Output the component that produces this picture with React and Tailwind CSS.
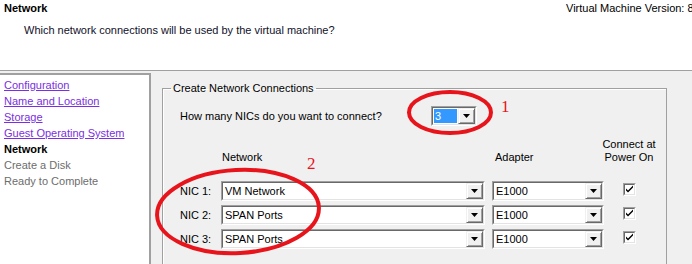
import React from 'react';

const navItems = [
  { label: 'Configuration', state: 'link' },
  { label: 'Name and Location', state: 'link' },
  { label: 'Storage', state: 'link' },
  { label: 'Guest Operating System', state: 'link' },
  { label: 'Network', state: 'current' },
  { label: 'Create a Disk', state: 'todo' },
  { label: 'Ready to Complete', state: 'todo' },
];

const nics = [
  { label: 'NIC 1:', network: 'VM Network', adapter: 'E1000' },
  { label: 'NIC 2:', network: 'SPAN Ports', adapter: 'E1000' },
  { label: 'NIC 3:', network: 'SPAN Ports', adapter: 'E1000' },
];

// sunken 2px windows-classic frame
const Sunken = ({ className = '', children }) => (
  <div className={`border border-t-[#a0a0a0] border-l-[#a0a0a0] border-b-white border-r-white ${className}`}>
    <div className="flex h-full w-full border border-t-[#696969] border-l-[#696969] border-b-[#e3e3e3] border-r-[#e3e3e3] bg-white">
      {children}
    </div>
  </div>
);

const DropButton = () => (
  <span className="flex h-full w-[17px] shrink-0 items-center justify-center border border-t-[#f0f0f0] border-l-[#f0f0f0] border-b-[#696969] border-r-[#696969] bg-[#f0f0f0] shadow-[inset_1px_1px_0_#fff,inset_-1px_-1px_0_#a0a0a0]">
    <svg width="7" height="4" viewBox="0 0 7 4">
      <path d="M0 0h7L3.5 4z" fill="#000" />
    </svg>
  </span>
);

const Combo = ({ value, className = '', selected = false }) => (
  <Sunken className={`h-[20px] ${className}`}>
    <span className="flex flex-1 items-center overflow-hidden p-[1px]">
      <span className={`flex h-full items-center pl-[1px] ${selected ? 'flex-1 bg-[#3399ff] text-white' : ''}`}>
        {value}
      </span>
    </span>
    <DropButton />
  </Sunken>
);

const Check = () => (
  <Sunken className="h-[13px] w-[13px]">
    <svg width="9" height="9" viewBox="0 0 9 9" className="m-auto">
      <path d="M1 3.5l2 2 5-5v2l-5 5-2-2z" fill="#000" />
    </svg>
  </Sunken>
);

export default function App() {
  return (
    <div className="relative h-[264px] w-[692px] overflow-hidden bg-[#f0f0f0] font-['Liberation_Sans',sans-serif] text-[11px] leading-[13px] text-black">
      {/* Header */}
      <header className="flex h-[71px] border-b border-[#a0a0a0] bg-white">
        <div className="w-[562px] shrink-0 pl-[4px] pt-[2px]">
          <div className="font-bold">Network</div>
          <div className="mt-[9px] pl-[20px] text-[#10102a]">
            Which network connections will be used by the virtual machine?
          </div>
        </div>
        <div className="whitespace-nowrap pl-[4px] pt-[2px]">Virtual Machine Version: 8</div>
      </header>

      <div className="flex h-[193px]">
        {/* Wizard steps */}
        <nav className="mt-[2px] w-[151px] shrink-0 border-t-2 border-r-2 border-t-[#a0a0a0] border-r-[#a0a0a0] bg-white pl-[4px] pt-[2px] leading-[16px]">
          {navItems.map((item) => (
            <div
              key={item.label}
              className={
                item.state === 'link'
                  ? 'text-[#7a2fe0] underline'
                  : item.state === 'current'
                  ? 'font-bold'
                  : 'text-[#6d6d6d]'
              }
            >
              {item.label}
            </div>
          ))}
        </nav>

        {/* Main */}
        <div className="pl-[11px]">
          <fieldset className="mt-[10px] h-[200px] w-[505px] border border-[#a0a0a0] shadow-[inset_1px_1px_0_#fff]">
            <legend className="ml-[8px] px-[2px] leading-[14px]">Create Network Connections</legend>
            <div className="pl-[17px]">
              <div className="mt-[11px] flex h-[20px] items-center">
                <span className="w-[251px]">How many NICs do you want to connect?</span>
                <Combo value="3" selected className="w-[46px]" />
              </div>

              <div className="mt-[12px] flex items-end">
                <span className="w-[41px]" />
                <span className="w-[264px] pl-[1px]">Network</span>
                <span className="ml-[7px] w-[112px] pl-[3px]">Adapter</span>
                <span className="flex w-[50px] flex-col items-center whitespace-nowrap">
                  <span>Connect at</span>
                  <span>Power On</span>
                </span>
              </div>

              <div className="mt-[17px] flex flex-col gap-[4px]">
                {nics.map((nic) => (
                  <div key={nic.label} className="flex h-[20px] items-center">
                    <span className="w-[41px]">{nic.label}</span>
                    <Combo value={nic.network} className="w-[264px]" />
                    <Combo value={nic.adapter} className="ml-[7px] w-[112px]" />
                    <span className="flex w-[50px] justify-center pb-[3px]">
                      <Check />
                    </span>
                  </div>
                ))}
              </div>
            </div>
          </fieldset>
        </div>
      </div>

      {/* Red annotations drawn over the screenshot */}
      <svg className="pointer-events-none absolute inset-0" width="692" height="264">
        <ellipse cx="450" cy="112.5" rx="41" ry="20.5" fill="none" stroke="#e8141c" strokeWidth="4" />
        <ellipse
          cx="238"
          cy="211.5"
          rx="81"
          ry="41.5"
          fill="none"
          stroke="#e8141c"
          strokeWidth="4"
          transform="rotate(-3 238 211.5)"
        />
        <text x="501" y="112" fill="#e8141c" fontFamily="'Liberation Serif', serif" fontSize="17">1</text>
        <text x="307" y="169" fill="#e8141c" fontFamily="'Liberation Serif', serif" fontSize="17">2</text>
      </svg>
    </div>
  );
}
